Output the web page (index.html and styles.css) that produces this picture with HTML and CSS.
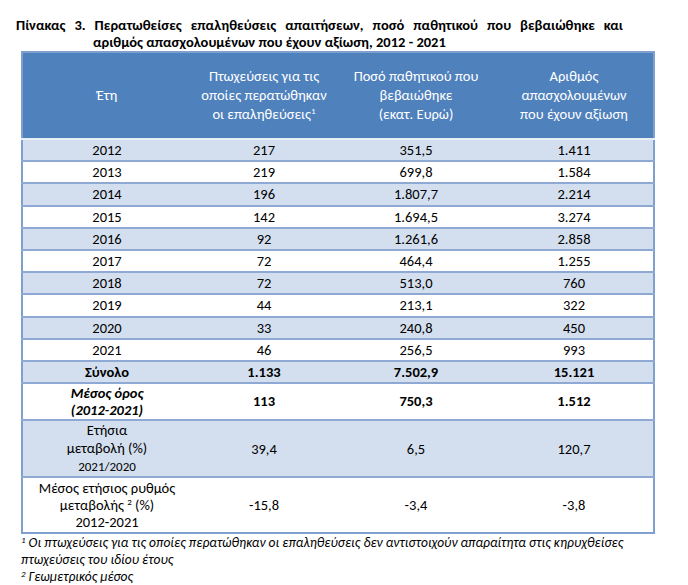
FILE: index.html
```html
<!DOCTYPE html>
<html lang="el">
<head>
<meta charset="utf-8">
<link rel="stylesheet" href="styles.css">
</head>
<body>
<div class="page">
  <p class="title">Πίνακας 3. Περατωθείσες επαληθεύσεις απαιτήσεων, ποσό παθητικού που βεβαιώθηκε και αριθμός απασχολουμένων που έχουν αξίωση, 2012 - 2021</p>
  <table class="tbl">
    <colgroup>
      <col class="c1"><col class="c2"><col class="c3"><col class="c4">
    </colgroup>
    <thead>
      <tr class="head">
        <th>Έτη</th>
        <th>Πτωχεύσεις για τις<br>οποίες περατώθηκαν<br>οι επαληθεύσεις<sup>1</sup></th>
        <th>Ποσό παθητικού που<br>βεβαιώθηκε<br>(εκατ. Ευρώ)</th>
        <th>Αριθμός<br>απασχολουμένων<br>που έχουν αξίωση</th>
      </tr>
    </thead>
    <tbody>
      <tr class="band"><td>2012</td><td>217</td><td>351,5</td><td>1.411</td></tr>
      <tr><td>2013</td><td>219</td><td>699,8</td><td>1.584</td></tr>
      <tr class="band"><td>2014</td><td>196</td><td>1.807,7</td><td>2.214</td></tr>
      <tr><td>2015</td><td>142</td><td>1.694,5</td><td>3.274</td></tr>
      <tr class="band"><td>2016</td><td>92</td><td>1.261,6</td><td>2.858</td></tr>
      <tr><td>2017</td><td>72</td><td>464,4</td><td>1.255</td></tr>
      <tr class="band"><td>2018</td><td>72</td><td>513,0</td><td>760</td></tr>
      <tr><td>2019</td><td>44</td><td>213,1</td><td>322</td></tr>
      <tr class="band"><td>2020</td><td>33</td><td>240,8</td><td>450</td></tr>
      <tr><td>2021</td><td>46</td><td>256,5</td><td>993</td></tr>
      <tr class="band bold"><td>Σύνολο</td><td>1.133</td><td>7.502,9</td><td>15.121</td></tr>
      <tr class="bold mean"><td class="it">Μέσος όρος<br>(2012-2021)</td><td>113</td><td>750,3</td><td>1.512</td></tr>
      <tr class="band annual"><td>Ετήσια<br>μεταβολή (%)<br><span class="small">2021/2020</span></td><td>39,4</td><td>6,5</td><td>120,7</td></tr>
      <tr class="last"><td>Μέσος ετήσιος ρυθμός<br>μεταβολής <sup>2</sup> (%)<br>2012-2021</td><td>-15,8</td><td>-3,4</td><td>-3,8</td></tr>
    </tbody>
  </table>
  <div class="notes">
    <p><sup>1</sup> Οι πτωχεύσεις για τις οποίες περατώθηκαν οι επαληθεύσεις δεν αντιστοιχούν απαραίτητα στις κηρυχθείσες πτωχεύσεις του ιδίου έτους</p>
    <p><sup>2</sup> Γεωμετρικός μέσος</p>
  </div>
</div>
</body>
</html>
```

FILE: styles.css
```css
* { box-sizing: border-box; }
body {
  margin: 0;
  background: #fff;
  font-family: Carlito, "Liberation Sans Narrow", "Open Sans", sans-serif;
  color: #000;
}
.page {
  padding: 17px 0 0 16px;
  width: 688px;
}
.title {
  width: 607px;
  margin: 0;
  font-size: 14.5px;
  font-weight: bold;
  line-height: 17px;
  text-align: justify;
  padding-left: 77px;
  text-indent: -77px;
}
.tbl {
  margin-left: 5px;
  width: 632px;
  border-collapse: collapse;
  table-layout: fixed;
  font-size: 14.5px;
  border: 2px solid #7f9fcf;
}
.c1 { width: 169px; }
.c2 { width: 146px; }
.c3 { width: 158px; }
.c4 { width: 159px; }
.head th {
  background: #4f81bd;
  color: #fff;
  font-weight: normal;
  height: 87px;
  line-height: 19px;
  text-align: center;
  vertical-align: middle;
  padding: 0;
  border-bottom: 2px solid #e8eef7;
}
sup {
  font-size: 9px;
  line-height: 0;
  vertical-align: 5px;
}
.tbl td {
  text-align: center;
  vertical-align: middle;
  height: 22.2px;
  padding: 0;
  line-height: 18px;
  border-top: 2px solid #8ea9d4;
}
.tbl tbody tr:first-child td { border-top: 0; }
.band td { background: #d3dfee; }
.bold td { font-weight: bold; }
.it { font-style: italic; }
.mean td { height: 37px; line-height: 17px; }
.annual td { height: 52px; line-height: 18px; }
.small { font-size: 13px; }
.last td { height: 56px; line-height: 17px; }
.notes {
  margin: 0 0 0 5px;
  width: 610px;
  font-size: 13.5px;
  font-style: italic;
  line-height: 17px;
}
.notes p { margin: 0; }
.notes sup { font-size: 9px; vertical-align: 4px; }
```
